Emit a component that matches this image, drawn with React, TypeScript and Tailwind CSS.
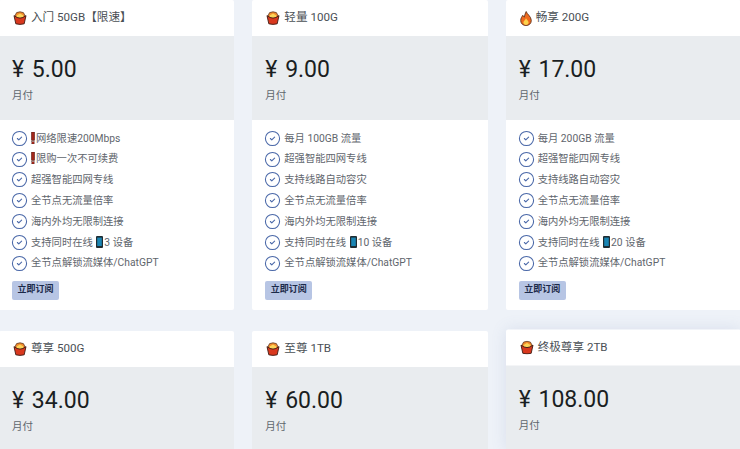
import React from 'react';
import { CircleCheck } from 'lucide-react';

const font = "font-['Roboto','Noto_Sans_CJK_SC',sans-serif]";

const Fries = () => (
  <svg viewBox="0 0 14 14" className="w-[14px] h-[14px] shrink-0">
    <path d="M2.4 3.8 3.6 1.6 7 .8l3.4.8 1.2 2.2.6 3H1.8Z" fill="#f08a2c" stroke="#4a2a18" strokeWidth="0.7" />
    <path d="M3.6 4.6 7 2.6l3.4 2L10 7H4Z" fill="#fcd55a" />
    <path d="M1 4.6Q7 9.6 13 4.6L11.2 12.8Q7 14 2.8 12.8Z" fill="#d9381e" stroke="#3f1c14" strokeWidth="0.9" />
  </svg>
);

const Flame = () => (
  <svg viewBox="0 0 12 15" className="w-[12px] h-[15px] shrink-0">
    <path d="M6.2.5C6.6 3 11.3 5.2 11.3 9.5 11.3 12.5 9 14.5 6 14.5S.7 12.5.7 9.5C.7 7.2 1.9 5.8 2.8 4.3 3.3 5.3 3.7 5.9 4.3 6.1 4.8 4.2 5.1 2.2 6.2.5Z" fill="#ee6a1f" stroke="#4f2814" strokeWidth="0.8" />
    <path d="M6 7.2C6.6 8.8 8.6 9.8 8.6 11.6 8.6 13.1 7.4 13.9 6 13.9S3.4 13.1 3.4 11.6C3.4 10 5.4 9 6 7.2Z" fill="#fcd34d" />
  </svg>
);

const Mark = () => (
  <svg viewBox="0 0 4 12" className="inline-block w-[4px] h-[12px] align-[-2px] mr-px">
    <rect x="0.3" y="0" width="3.4" height="8.4" rx="0.6" fill="#a3261a" stroke="#3a1a14" strokeWidth="0.5" />
    <rect x="0.8" y="9.6" width="2.4" height="2.4" fill="#a3261a" stroke="#3a1a14" strokeWidth="0.3" />
  </svg>
);

const Phone = () => (
  <svg viewBox="0 0 7 12" className="inline-block w-[7px] h-[12px] align-[-2px] mx-px">
    <rect x="0" y="0" width="7" height="12" rx="1" fill="#1f2d33" />
    <rect x="1.2" y="1.6" width="4.6" height="8.4" fill="#1a86b4" />
  </svg>
);

const baseFeatures = ['超强智能四网专线', '全节点无流量倍率', '海内外均无限制连接'];

const plans = [
  {
    title: '入门 50GB【限速】',
    icon: <Fries />,
    price: '5.00',
    features: [
      <><Mark />网络限速200Mbps</>,
      <><Mark />限购一次不可续费</>,
      ...baseFeatures,
      <>支持同时在线 <Phone />3 设备</>,
      '全节点解锁流媒体/ChatGPT',
    ],
  },
  {
    title: '轻量 100G',
    icon: <Fries />,
    price: '9.00',
    features: [
      '每月 100GB 流量',
      '超强智能四网专线',
      '支持线路自动容灾',
      '全节点无流量倍率',
      '海内外均无限制连接',
      <>支持同时在线 <Phone />10 设备</>,
      '全节点解锁流媒体/ChatGPT',
    ],
  },
  {
    title: '畅享 200G',
    icon: <Flame />,
    price: '17.00',
    features: [
      '每月 200GB 流量',
      '超强智能四网专线',
      '支持线路自动容灾',
      '全节点无流量倍率',
      '海内外均无限制连接',
      <>支持同时在线 <Phone />20 设备</>,
      '全节点解锁流媒体/ChatGPT',
    ],
  },
  { title: '尊享 500G', icon: <Fries />, price: '34.00', features: [] },
  { title: '至尊 1TB', icon: <Fries />, price: '60.00', features: [] },
  { title: '终极尊享 2TB', icon: <Fries />, price: '108.00', features: [], lifted: true },
];

export default function App() {
  return (
    <div className={`h-[449px] overflow-hidden bg-[#eef2f8] ${font}`}>
      <div className="grid grid-cols-3 gap-x-[18px] gap-y-[21px] -mx-px">
        {plans.map((plan) => (
          <div
            key={plan.title}
            className={`bg-white rounded-[2px] ${plan.lifted ? '-translate-y-[1.5px] shadow-[0_0_16px_rgba(90,110,170,0.14)]' : ''}`}
          >
            {/* Header */}
            <div className="h-[36px] flex items-center gap-[4px] pl-[14px] text-[11.6px] text-[#4a4f55]">
              {plan.icon}
              <span>{plan.title}</span>
            </div>

            {/* Price */}
            <div className="h-[84px] bg-[#e9ecef] pl-[13px] pt-[17px]">
              <div className="text-[23px] leading-[34px] text-[#1a1e22] [word-spacing:2px]">¥ {plan.price}</div>
              <div className="text-[10.5px] leading-[15px] mt-[1px] text-[#5f666d]">月付</div>
            </div>

            {/* Features */}
            {plan.features.length > 0 && (
              <div className="pl-[12px] pt-[8px] h-[190px]">
                <ul className="flex flex-col">
                  {plan.features.map((feature, i) => (
                    <li key={i} className="h-[20.8px] flex items-center gap-[3px] text-[10.3px] text-[#5f666d]">
                      <CircleCheck className="w-[17px] h-[17px] shrink-0 text-[#4a68a8]" strokeWidth={1.5} />
                      <span className="whitespace-nowrap">{feature}</span>
                    </li>
                  ))}
                </ul>
                <button className="ml-[1px] mt-[7px] h-[19px] w-[47px] rounded-[2px] bg-[#b7c5e4] text-[9px] font-bold text-[#1c2a4a]">
                  立即订阅
                </button>
              </div>
            )}
          </div>
        ))}
      </div>
    </div>
  );
}
